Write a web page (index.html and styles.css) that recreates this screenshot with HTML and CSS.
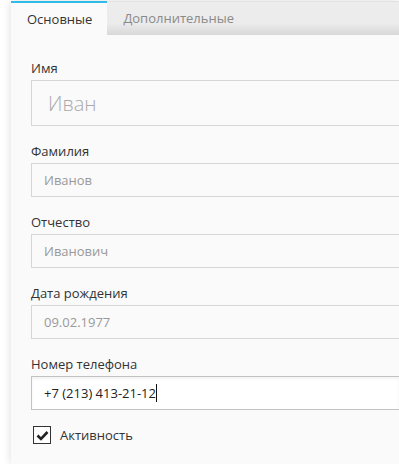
FILE: index.html
```html
<!DOCTYPE html>
<html lang="ru">
<head>
  <meta charset="UTF-8">
  <meta name="viewport" content="width=device-width, initial-scale=1.0">
  <link rel="stylesheet" href="styles.css">
</head>
<body>
  <div class="panel">
    <!-- tabs -->
    <div class="tabs">
      <div class="tab active">Основные</div>
      <div class="tab">Дополнительные</div>
    </div>

    <!-- form -->
    <form class="form">
      <div class="field">
        <label class="label">Имя</label>
        <input class="input big" type="text" value="Иван" readonly>
      </div>
      <div class="field">
        <label class="label">Фамилия</label>
        <input class="input" type="text" value="Иванов" readonly>
      </div>
      <div class="field">
        <label class="label">Отчество</label>
        <input class="input" type="text" value="Иванович" readonly>
      </div>
      <div class="field">
        <label class="label">Дата рождения</label>
        <input class="input" type="text" value="09.02.1977" readonly>
      </div>
      <div class="field">
        <label class="label">Номер телефона</label>
        <div class="input focused">+7 (213) 413-21-12<span class="caret"></span></div>
      </div>
      <label class="check">
        <span class="box">
          <svg width="13" height="11" viewBox="0 0 13 11"><path d="M1.5 5.5 L5 9 L11.5 2" fill="none" stroke="#222" stroke-width="2.6"/></svg>
        </span>
        Активность
      </label>
    </form>
  </div>
</body>
</html>
```

FILE: styles.css
```css
html, body {
  margin: 0;
  padding: 0;
}

body {
  background-color: #fff;
  font-family: 'Open Sans', 'Noto Sans', sans-serif;
  font-size: 13px;
  color: #333;
  overflow: hidden;
  height: 464px;
}

.panel {
  margin: 1px 0 0 11px;
  background-color: #fafafa;
  box-shadow: 0 0 9px rgba(0,0,0,0.14);
  height: 463px;
}

.tabs {
  display: flex;
  height: 33px;
  background: linear-gradient(#ededed 0%, #ebebeb 65%, #d8d8d8 100%);
  border-top: 1px solid #e2e2e2;
}

.tab {
  padding: 0 16px;
  line-height: 33px;
  color: #8a8a8a;
}

.tab.active {
  background-color: #fafafa;
  color: #333;
  border-top: 2px solid #2ebbe8;
  margin-top: -1px;
  line-height: 32px;
  padding-right: 15px;
}

.form {
  padding: 24px 0 0 20px;
}

.field {
  margin-bottom: 16px;
}

.label {
  display: block;
  line-height: 18px;
  margin-bottom: 3px;
  color: #333;
}

.input {
  display: block;
  box-sizing: border-box;
  width: 100%;
  height: 34px;
  margin: 0;
  padding: 0 12px;
  border: 1px solid #d6d6d6;
  border-right: none;
  background-color: #fafafa;
  font-family: inherit;
  font-size: 13px;
  color: #999;
  outline: none;
}

.input.big {
  height: 46px;
  padding-left: 16px;
  font-size: 20px;
  font-weight: 300;
  color: #aaa;
}

.input.focused {
  background-color: #fff;
  border-color: #c2c2c2;
  color: #222;
  line-height: 32px;
  box-shadow: 0 2px 3px rgba(0,0,0,0.05) inset;
}

.caret {
  display: inline-block;
  width: 1px;
  height: 18px;
  background-color: #111;
  vertical-align: -4px;
}

.check {
  display: flex;
  align-items: center;
  margin-top: 13px;
  margin-left: 2px;
  color: #333;
}

.box {
  display: flex;
  align-items: center;
  justify-content: center;
  box-sizing: border-box;
  width: 18px;
  height: 18px;
  margin-right: 9px;
  border: 1px solid #333;
  background-color: #fff;
}
```
